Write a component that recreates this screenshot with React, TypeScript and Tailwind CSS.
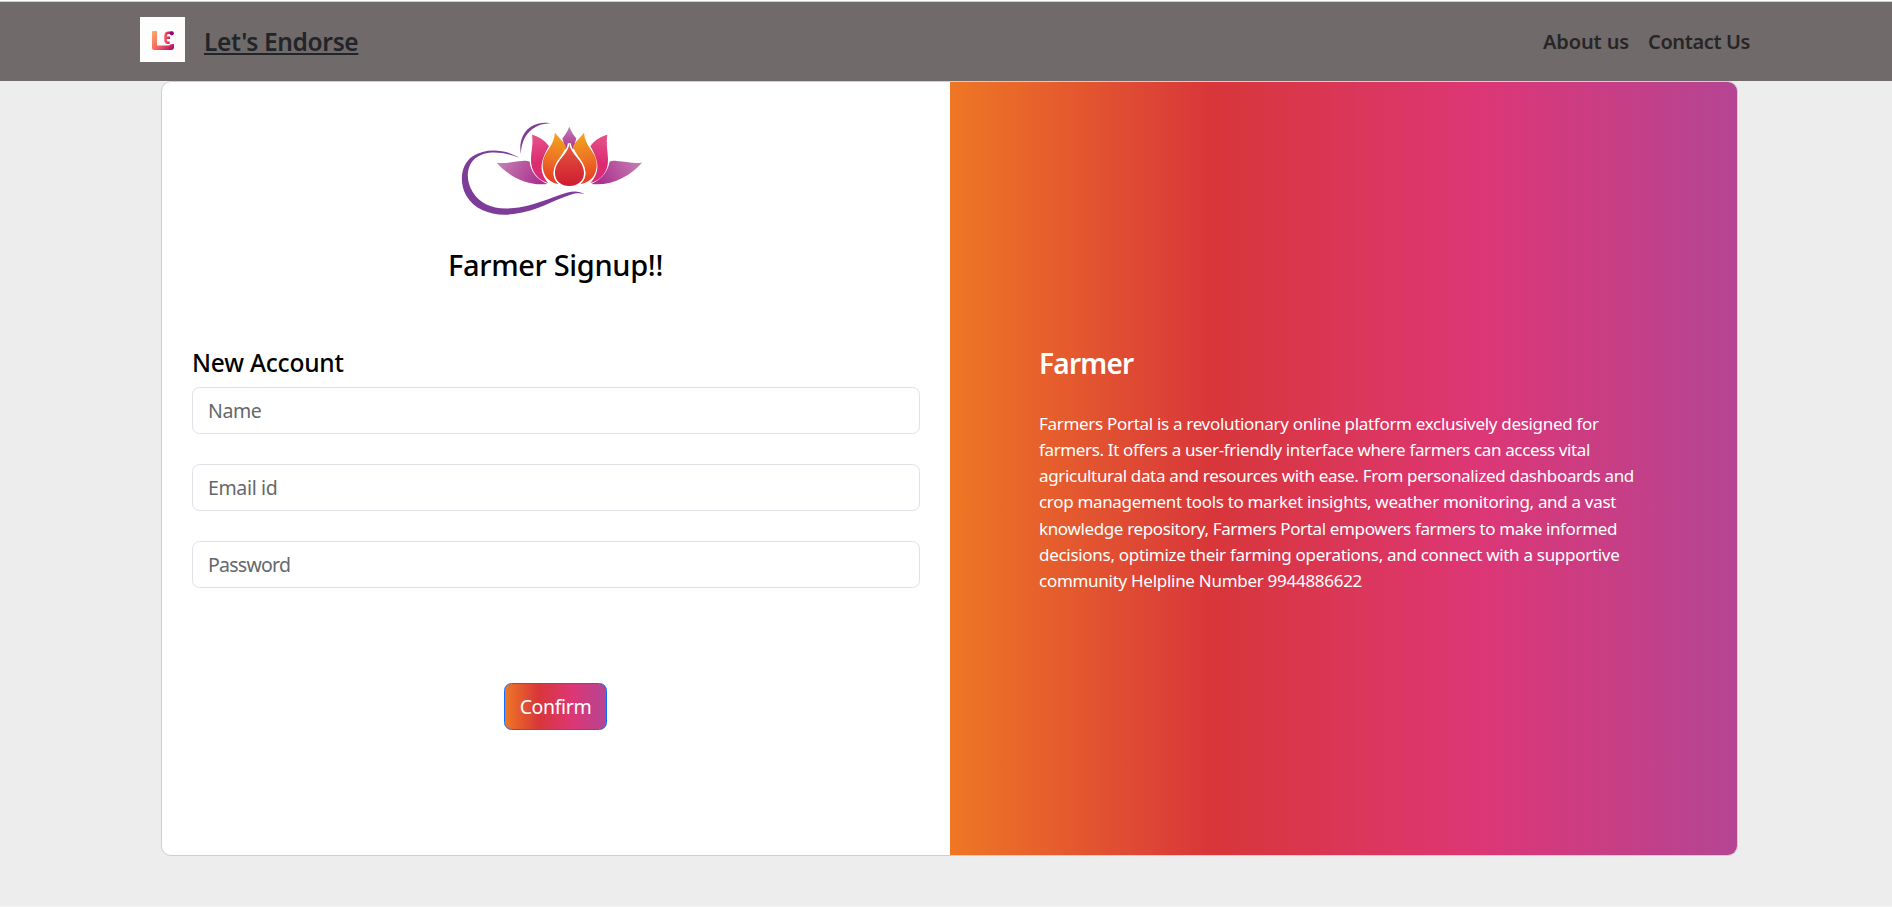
function BrandMark() {
  return (
    <svg viewBox="0 0 45 45" className="size-[45px] shrink-0" aria-hidden="true">
      <defs>
        <linearGradient id="markL" gradientUnits="userSpaceOnUse" x1="12" y1="14" x2="34" y2="34">
          <stop offset="0" stopColor="#f9b06e" />
          <stop offset="0.5" stopColor="#f8625f" />
          <stop offset="1" stopColor="#a3006f" />
        </linearGradient>
        <linearGradient id="markE" gradientUnits="userSpaceOnUse" x1="24" y1="0" x2="34" y2="0">
          <stop offset="0" stopColor="#fb5f62" />
          <stop offset="0.5" stopColor="#e0245f" />
          <stop offset="1" stopColor="#8b0070" />
        </linearGradient>
      </defs>
      <rect width="45" height="45" fill="#fdfdfe" />
      <path
        d="M12 14.6Q12 14 12.8 14H16.4Q17 14 17 14.8V28.6H29Q30.5 26.5 34 27V31Q33.6 33 31.5 33H14Q12 33 12 31Z"
        fill="url(#markL)"
      />
      <path
        d="M32.3 15.8H28.6Q25.6 15.8 25.5 19V23.2Q25.6 25.7 28 25.7H29.6M25.8 20.8H30"
        fill="none"
        stroke="url(#markE)"
        strokeWidth="2.5"
      />
      <circle cx="31.8" cy="16.3" r="2.1" fill="#98006d" />
    </svg>
  );
}

function Lotus() {
  return (
    <svg viewBox="0 0 630 345" className="mr-[2px] h-[115px] w-[210px]" aria-hidden="true">
      <defs>
        <linearGradient id="leafL" gradientUnits="userSpaceOnUse" x1="145" y1="150" x2="270" y2="220">
          <stop offset="0" stopColor="#c583b5" />
          <stop offset="1" stopColor="#ab2f8d" />
        </linearGradient>
        <linearGradient id="leafR" gradientUnits="userSpaceOnUse" x1="572" y1="150" x2="450" y2="220">
          <stop offset="0" stopColor="#c583b5" />
          <stop offset="1" stopColor="#ab2f8d" />
        </linearGradient>
        <linearGradient id="pinkL" gradientUnits="userSpaceOnUse" x1="245" y1="80" x2="275" y2="210">
          <stop offset="0" stopColor="#e5528a" />
          <stop offset="0.6" stopColor="#dc2c70" />
          <stop offset="1" stopColor="#d92b78" />
        </linearGradient>
        <linearGradient id="pinkR" gradientUnits="userSpaceOnUse" x1="472" y1="80" x2="443" y2="210">
          <stop offset="0" stopColor="#e5528a" />
          <stop offset="0.6" stopColor="#dc2c70" />
          <stop offset="1" stopColor="#d92b78" />
        </linearGradient>
        <linearGradient id="orangeL" gradientUnits="userSpaceOnUse" x1="325" y1="75" x2="290" y2="215">
          <stop offset="0" stopColor="#f2a11e" />
          <stop offset="0.5" stopColor="#ee7424" />
          <stop offset="1" stopColor="#e63a25" />
        </linearGradient>
        <linearGradient id="orangeR" gradientUnits="userSpaceOnUse" x1="392" y1="75" x2="427" y2="215">
          <stop offset="0" stopColor="#f2a11e" />
          <stop offset="0.5" stopColor="#ee7424" />
          <stop offset="1" stopColor="#e63a25" />
        </linearGradient>
        <linearGradient id="drop" x1="0" y1="0" x2="0" y2="1">
          <stop offset="0" stopColor="#e25b3e" />
          <stop offset="0.6" stopColor="#d83436" />
          <stop offset="1" stopColor="#cd1c32" />
        </linearGradient>
        <linearGradient id="tip" x1="0" y1="0" x2="0" y2="1">
          <stop offset="0" stopColor="#c27db3" />
          <stop offset="1" stopColor="#a93592" />
        </linearGradient>
      </defs>
      <path
        d="M208 143C165 117 107 113 68 139C31 165 27 218 49 257C76 303 133 320 191 312C264 302 310 270 362 254C379 249 391 249 403 253C389 243 371 243 350 248C300 262 248 291 183 295C128 299 89 280 68 246C47 211 48 169 76 145C108 119 160 125 208 143Z"
        fill="#7d3c98"
      />
      <path d="M213 132C202 75 242 30 301 40C250 41 214 76 213 132Z" fill="#7d3c98" />
      <path
        d="M140 158C168 162 190 154 216 153C226 152 233 153 239 155C241 182 259 207 292 222C228 228 176 198 140 158Z"
        fill="url(#leafL)"
      />
      <path
        d="M576 158C548 162 526 154 500 153C490 152 485 153 479 155C474 182 457 207 424 222C488 228 540 198 576 158Z"
        fill="url(#leafR)"
      />
      <path d="M358 50C365 67 371 75 379 85L370 118H346L337 85C345 75 351 67 358 50Z" fill="url(#tip)" />
      <path
        d="M246 74C267 80 285 90 297 109C280 138 258 180 295 219C264 211 241 183 243 146C244 119 250 103 246 74Z"
        fill="url(#pinkL)"
      />
      <path
        d="M472 74C451 80 433 90 421 109C438 138 459 180 421 219C454 211 476 183 474 146C473 119 468 103 472 74Z"
        fill="url(#pinkR)"
      />
      <path
        d="M315 68C326 83 341 94 348 110C341 134 311 158 311 190C311 205 319 216 328 222C292 218 273 188 279 152C286 120 312 108 315 68Z"
        fill="url(#orangeL)"
      />
      <path
        d="M402 68C391 83 376 94 369 110C376 134 406 158 406 190C406 205 398 216 389 222C426 218 445 188 439 152C432 120 405 108 402 68Z"
        fill="url(#orangeR)"
      />
      <path
        d="M358 100C361 136 402 150 402 189C402 214 382 228 358 228C334 228 315 214 315 189C315 150 355 136 358 100Z"
        fill="url(#drop)"
        stroke="#fff"
        strokeWidth="9"
        paintOrder="stroke"
      />
    </svg>
  );
}

const fields = [
  { name: "Name", type: "text", tracking: "placeholder:tracking-[-0.4px]" },
  { name: "Email id", type: "email", tracking: "placeholder:tracking-[-0.35px]" },
  { name: "Password", type: "password", tracking: "placeholder:tracking-[-0.75px]" },
];

const about = [
  { text: "Farmers Portal is a revolutionary online platform exclusively designed for", tracking: "tracking-[-0.308px]" },
  { text: "farmers. It offers a user-friendly interface where farmers can access vital", tracking: "tracking-[-0.361px]" },
  { text: "agricultural data and resources with ease. From personalized dashboards and", tracking: "tracking-[-0.333px]" },
  { text: "crop management tools to market insights, weather monitoring, and a vast", tracking: "tracking-[-0.322px]" },
  { text: "knowledge repository, Farmers Portal empowers farmers to make informed", tracking: "tracking-[-0.364px]" },
  { text: "decisions, optimize their farming operations, and connect with a supportive", tracking: "tracking-[-0.297px]" },
  { text: "community Helpline Number 9944886622", tracking: "tracking-[-0.283px]" },
];

export default function App() {
  return (
    <div className="flex h-[907px] w-full flex-col overflow-hidden border-b-2 border-[#f1f1f1] bg-[#ededed] font-['Noto_Sans',sans-serif] text-black">
      <div className="h-0.5 shrink-0 border-b border-[#cfd0d0] bg-white" />
      <nav className="flex h-[79px] shrink-0 items-center justify-between bg-[#716a6a] pr-[141px] pl-[140px] font-semibold">
        <div className="flex items-center">
          <div className="pb-1">
            <BrandMark />
          </div>
          <a
            href="#"
            className="ml-[19px] text-[24.5px] leading-[38px] tracking-[-0.34px] whitespace-nowrap text-[#212529] underline decoration-2 underline-offset-2"
          >
            Let's Endorse
          </a>
        </div>
        <div className="flex text-xl whitespace-nowrap text-[#262626]">
          <a href="#" className="w-[105px] tracking-[-0.125px]">
            About us
          </a>
          <a href="#" className="w-[103px] tracking-[-0.38px]">
            Contact Us
          </a>
        </div>
      </nav>

      <main className="ml-[161px] flex h-[775px] w-[1577px] shrink-0 overflow-hidden rounded-[10px] border border-[#cfcfcf] bg-white">
        <section className="flex w-[788px] flex-col items-center pt-7">
          <Lotus />
          <h1 className="mt-[22px] pr-px text-[29px] leading-9 font-medium tracking-[-0.33px]">Farmer Signup!!</h1>
          <form className="flex w-[728px] flex-col" onSubmit={(e) => e.preventDefault()}>
            <h2 className="mt-[65px] mb-[9px] text-[24.5px] leading-[30px] font-medium tracking-[-0.2px]">New Account</h2>
            <div className="flex flex-col gap-[30px]">
              {fields.map((f) => (
                <input
                  key={f.name}
                  type={f.type}
                  placeholder={f.name}
                  className={`h-[47px] w-full rounded-[7.5px] border border-[#dee2e6] bg-white px-[15px] text-[19.5px] placeholder:text-[#65686b] ${f.tracking}`}
                />
              ))}
            </div>
            <button
              type="submit"
              className="mt-[95px] mr-px h-[47px] w-[103px] self-center rounded-[7.5px] border border-[#0d6efd] bg-[linear-gradient(to_right,#ee7724,#d8363a,#dd3675,#b44593)] text-[19.5px] tracking-[-0.35px] text-white"
            >
              Confirm
            </button>
          </form>
        </section>
        <section className="flex-1 bg-[linear-gradient(to_right,#ee7724,#d8363a,#dd3675,#b44593)] pt-[263px] pl-[89px] text-white">
          <h2 className="text-[28px] leading-9 font-semibold tracking-[-0.75px]">Farmer</h2>
          <p className="mt-[29.5px] text-[17px] leading-[26.25px] whitespace-nowrap">
            {about.map((line) => (
              <span key={line.text} className={`block ${line.tracking}`}>
                {line.text}
              </span>
            ))}
          </p>
        </section>
      </main>
    </div>
  );
}
